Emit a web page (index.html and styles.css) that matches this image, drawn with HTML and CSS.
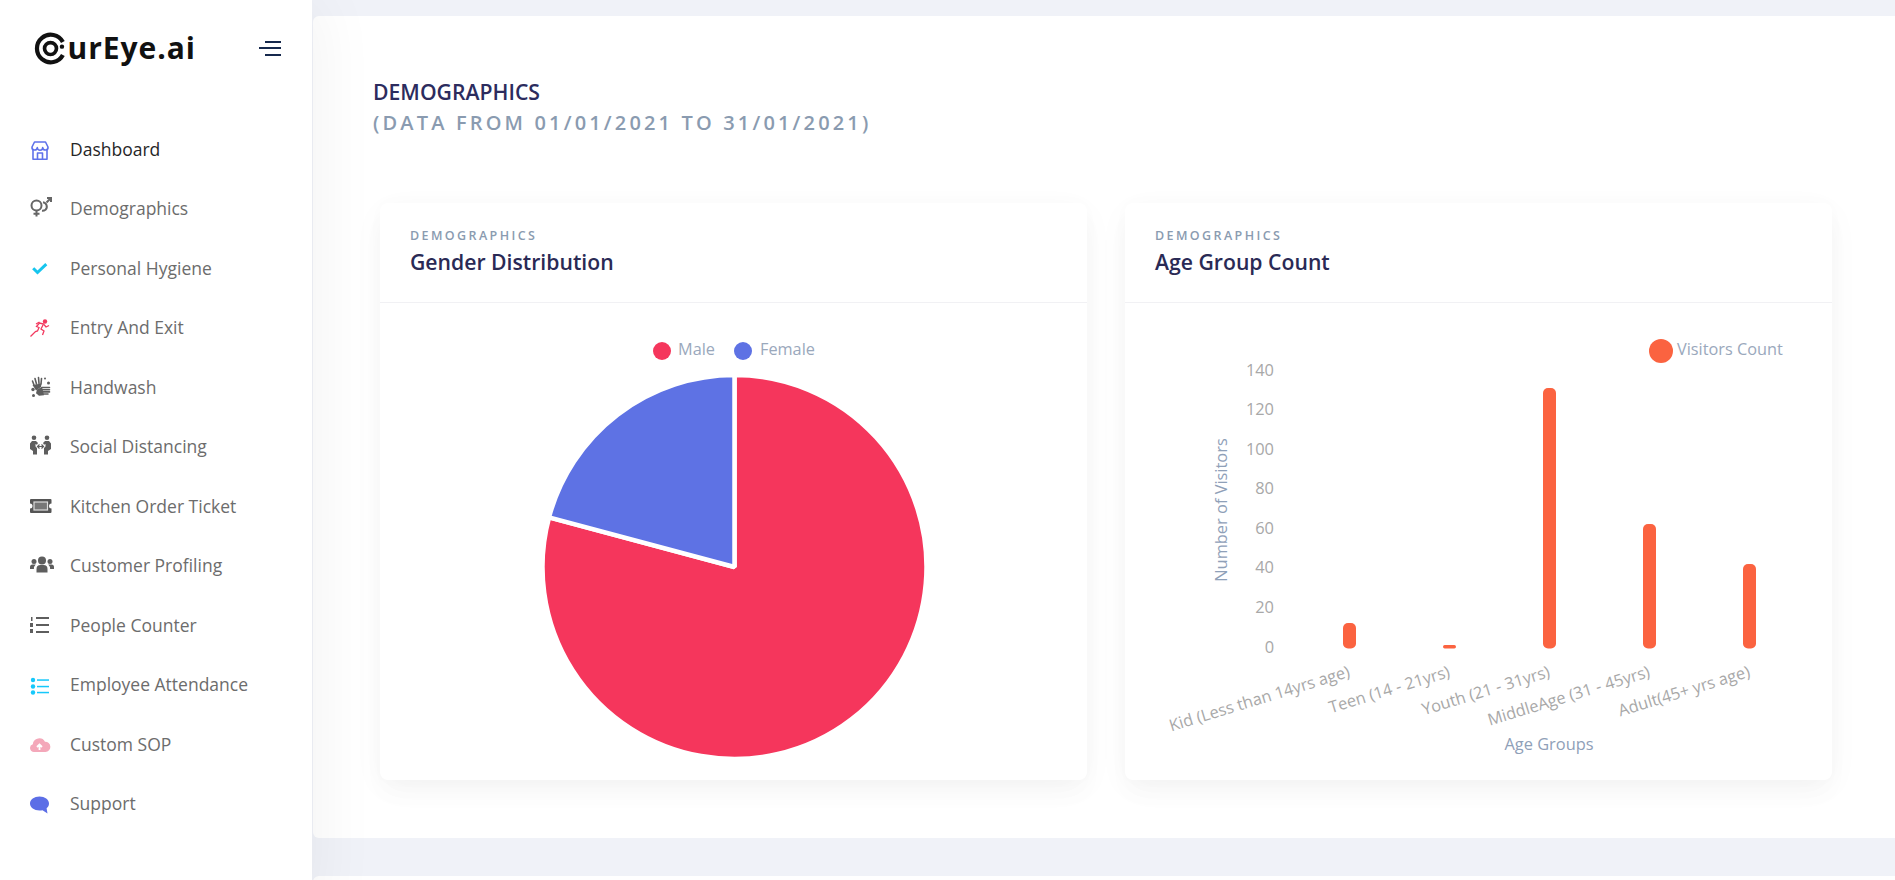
FILE: index.html
```html
<!DOCTYPE html>
<html lang="en">
<head>
<meta charset="utf-8">
<title>OurEye.ai Demographics</title>
<link rel="stylesheet" href="styles.css">
</head>
<body>
<div class="app">
  <aside class="sidebar">
    <div class="brand">
      <div class="logo">
        <svg class="logo-mark" viewBox="0 0 36 36" width="33" height="33" aria-hidden="true">
          <path d="M31.500 11A15 15 0 1 0 31.500 25" fill="none" stroke="#111" stroke-width="4.600"/>
          <circle cx="18" cy="18" r="6.500" fill="none" stroke="#111" stroke-width="4"/>
          <circle cx="30.500" cy="16" r="2.400" fill="#111"/>
        </svg>
        <span class="logo-text">urEye.ai</span>
      </div>
      <button class="burger" aria-label="Toggle menu"><i class="b-short"></i><i class="b-long"></i><i class="b-short"></i></button>
    </div>
    <nav class="nav">
      <a class="nav-item active">
        <svg class="ico" viewBox="0 0 24 24" aria-hidden="true"><g fill="none" stroke="#5f72ea" stroke-width="1.6" stroke-linejoin="round"><path d="M4.500 5h11l2.500 5a2.600 2.600 0 0 1-5.300.6 2.700 2.700 0 0 1-5.400 0A2.600 2.600 0 0 1 2 10z"/><path d="M3 12v10.200h14V12"/><path d="M7.500 22v-6h5v6"/></g></svg>
        <span>Dashboard</span>
      </a>
      <a class="nav-item">
        <svg class="ico" viewBox="0 0 24 24" aria-hidden="true"><g fill="none" stroke="#666" stroke-width="2"><circle cx="6.500" cy="9.500" r="5"/><path d="M6.500 14.500v6M3.500 17.800h6"/><path d="M13 6.200a4.500 4.500 0 0 1 2.500 7.600 5 5 0 0 1-3.500 1"/><path d="M16.500 6.500l4-4M17 2h4v4"/></g></svg>
        <span>Demographics</span>
      </a>
      <a class="nav-item">
        <svg class="ico" viewBox="0 0 24 24" aria-hidden="true"><path d="M3.200 12.200l4.300 4.300 8.800-8.400" fill="none" stroke="#16c5ee" stroke-width="3"/></svg>
        <span>Personal Hygiene</span>
      </a>
      <a class="nav-item">
        <svg class="ico" viewBox="0 0 24 24" aria-hidden="true"><g fill="none" stroke="#f2395f" stroke-width="1.300"><path d="M.5 21.500l5-5 2-.5 1.500-3.500-2.500-1 3-3.500 4 1-2.500 5 3 2-1.500 4"/><path d="M6 9l3.500-2M14 9.500l2 2.500 3-1.500"/></g><circle cx="15" cy="6.500" r="2.200" fill="#f2395f"/></svg>
        <span>Entry And Exit</span>
      </a>
      <a class="nav-item">
        <svg class="ico" viewBox="0 0 24 24" aria-hidden="true"><g fill="none" stroke="#5e5e5e" stroke-linecap="round" stroke-width="1.600"><path d="M4 10L2.500 6M6.500 9L5 3.500M9 8.500L8.500 2.500M11 9l.5-5.500"/><path d="M12 12.500h7.500M12 14.700h7.500M12 16.900h7.500M12 19h6"/></g><g fill="#5e5e5e"><path d="M2.500 10l9-1.500-.5 3.500-5 3.500z"/><path d="M7 14.500l5-2.800 2 8.600-5 .5-3-2.500z"/><circle cx="3" cy="14.500" r="1.700"/><circle cx="3.500" cy="20.500" r="1.500"/><circle cx="15" cy="3.500" r="1"/><circle cx="18.500" cy="8" r="1.500"/></g></svg>
        <span>Handwash</span>
      </a>
      <a class="nav-item">
        <svg class="ico" viewBox="0 0 24 24" aria-hidden="true"><g fill="#5e5e5e"><circle cx="4" cy="3.800" r="2.300"/><circle cx="17" cy="3.800" r="2.300"/><path d="M0 9.500l2-2.500h4l2 2-1 1.800L5.500 10v2.500L7 14v6.500H3v-3.500l-3-2z"/><path d="M21 9.500l-2-2.500h-4l-2 2 1 1.800 1.500-.8v2.500L14 14v6.500h4v-3.500l3-2z"/></g><path d="M7.500 12.500h6M9.500 10.500l-2 2 2 2M11.500 10.500l2 2-2 2" fill="none" stroke="#5e5e5e" stroke-width="1.200"/></svg>
        <span>Social Distancing</span>
      </a>
      <a class="nav-item">
        <svg class="ico" viewBox="0 0 24 24" aria-hidden="true"><path d="M1 5h19.500a1 1 0 0 1 1 1v3.500a2.500 2.500 0 0 0 0 5V18a1 1 0 0 1-1 1H1a1 1 0 0 1-1-1v-3.500a2.500 2.500 0 0 0 0-5V6a1 1 0 0 1 1-1z" fill="#555"/><rect x="4" y="8" width="13.500" height="8" fill="#777" stroke="#ddd" stroke-width="1.200"/></svg>
        <span>Kitchen Order Ticket</span>
      </a>
      <a class="nav-item">
        <svg class="ico" viewBox="0 0 24 24" aria-hidden="true"><g fill="#5e5e5e"><circle cx="12" cy="7.500" r="4"/><circle cx="4" cy="8.500" r="2.500"/><circle cx="20" cy="8.500" r="2.500"/><path d="M6.500 19.500v-3.500a4 4 0 0 1 4-4h3a4 4 0 0 1 4 4v3.500z"/><path d="M0 16v-2a2.500 2.500 0 0 1 2.500-2.500h3.200a6 6 0 0 0-1.800 4.500z"/><path d="M24 16v-2a2.500 2.500 0 0 0-2.500-2.500h-3.200a6 6 0 0 1 1.800 4.500z"/></g></svg>
        <span>Customer Profiling</span>
      </a>
      <a class="nav-item">
        <svg class="ico" viewBox="0 0 24 24" aria-hidden="true"><g fill="#5e5e5e"><rect x="6" y="4" width="13" height="2"/><rect x="6" y="11" width="13" height="2"/><rect x="6" y="18" width="13" height="2"/><rect x="1" y="4" width="1.500" height="4"/><rect x="0" y="10" width="3" height="4"/><rect x="0" y="16" width="3" height="4"/></g></svg>
        <span>People Counter</span>
      </a>
      <a class="nav-item">
        <svg class="ico" viewBox="0 0 24 24" aria-hidden="true"><g fill="#16c8fb"><circle cx="3" cy="8" r="2.200"/><circle cx="3" cy="14.500" r="2.200"/><circle cx="3" cy="20.500" r="2.200"/><rect x="7" y="7.300" width="12" height="1.500"/><rect x="7" y="13.800" width="12" height="1.500"/><rect x="7" y="19.800" width="12" height="1.500"/></g></svg>
        <span>Employee Attendance</span>
      </a>
      <a class="nav-item">
        <svg class="ico" viewBox="0 0 24 24" aria-hidden="true"><path d="M4 20a4 4 0 0 1-1.200-7.800A6.500 6.500 0 0 1 15 9.800 5 5 0 0 1 15.500 20z" fill="#f4a8ba"/><path d="M9.500 18v-5M7 15l2.500-2.500L12 15" fill="none" stroke="#fff" stroke-width="1.800"/></svg>
        <span>Custom SOP</span>
      </a>
      <a class="nav-item">
        <svg class="ico" viewBox="0 0 24 24" aria-hidden="true"><path d="M9.500 5.500c5.300 0 9.500 2.900 9.500 6.900 0 1.900-.9 3.600-2.400 4.800l.9 5.300-5-3.300c-1 .2-2 .2-3 .2C4.200 19.400 0 16.300 0 12.400s4.200-6.900 9.500-6.900z" fill="#5c6ee6"/></svg>
        <span>Support</span>
      </a>
    </nav>
  </aside>

  <main class="main">
    <section class="panel">
      <header class="page-head">
        <h1 class="page-title">DEMOGRAPHICS</h1>
        <p class="page-sub">(DATA FROM 01/01/2021 TO 31/01/2021)</p>
      </header>
      <div class="cards">
        <article class="card">
          <header class="card-head">
            <div class="card-kicker">DEMOGRAPHICS</div>
            <h2 class="card-title">Gender Distribution</h2>
          </header>
          <svg class="chart" viewBox="380 303 707 477" role="img" aria-label="Gender distribution pie chart">
            <circle cx="662" cy="351" r="9" fill="#f5365c"/>
            <text class="legend-text" x="678" y="354.500">Male</text>
            <circle cx="743" cy="351" r="9" fill="#5e72e4"/>
            <text class="legend-text" x="760" y="354.500">Female</text>
            <path d="M734.500 567L734.500 375A192 192 0 1 1 549.040 517.310Z" fill="#f5365c" stroke="#fff" stroke-width="4.500" stroke-linejoin="bevel"/>
            <path d="M734.500 567L549.040 517.310A192 192 0 0 1 734.500 375Z" fill="#5e72e4" stroke="#fff" stroke-width="4.500" stroke-linejoin="bevel"/>
          </svg>
        </article>
        <article class="card">
          <header class="card-head">
            <div class="card-kicker">DEMOGRAPHICS</div>
            <h2 class="card-title">Age Group Count</h2>
          </header>
          <svg class="chart" viewBox="1125 303 707 477" role="img" aria-label="Age group bar chart">
            <circle cx="1661" cy="351" r="12" fill="#fb6340"/>
            <text class="legend-text" x="1677" y="354.500">Visitors Count</text>
            <g class="tick" text-anchor="end">
              <text x="1274" y="375.500">140</text>
              <text x="1274" y="415">120</text>
              <text x="1274" y="454.500">100</text>
              <text x="1274" y="494">80</text>
              <text x="1274" y="533.500">60</text>
              <text x="1274" y="573.200">40</text>
              <text x="1274" y="613">20</text>
              <text x="1274" y="652.800">0</text>
            </g>
            <text class="axis-title" text-anchor="middle" transform="translate(1226.500 510) rotate(-90)">Number of Visitors</text>
            <g fill="#fb6340">
              <rect x="1343" y="623" width="13" height="25.500" rx="5"/>
              <rect x="1443" y="645" width="13" height="3.500" rx="1.700"/>
              <rect x="1543" y="388" width="13" height="260.500" rx="5"/>
              <rect x="1643" y="524" width="13" height="124.500" rx="5"/>
              <rect x="1743" y="564" width="13" height="84.500" rx="5"/>
            </g>
            <g class="tick" text-anchor="end">
              <text transform="translate(1351 676.500) rotate(-17)">Kid (Less than 14yrs age)</text>
              <text transform="translate(1451 676.500) rotate(-17)">Teen (14 - 21yrs)</text>
              <text transform="translate(1551 676.500) rotate(-17)">Youth (21 - 31yrs)</text>
              <text transform="translate(1651 676.500) rotate(-17)">MiddleAge (31 - 45yrs)</text>
              <text transform="translate(1751 676.500) rotate(-17)">Adult(45+ yrs age)</text>
            </g>
            <text class="axis-title" x="1549" y="750" text-anchor="middle">Age Groups</text>
          </svg>
        </article>
      </div>
    </section>
    <div class="panel-next"></div>
  </main>
</div>
</body>
</html>
```
FILE: styles.css
```css
* { box-sizing: border-box; }
html, body { margin: 0; height: 880px; overflow: hidden; }
body { font-family: "Open Sans", "Liberation Sans", sans-serif; background: #f0f2f8; }
.app { display: grid; grid-template-columns: 312px 1fr; height: 880px; }

.sidebar { background: #fff; box-shadow: 7px 0 60px rgba(0,0,0,.05); position: relative; z-index: 2; }
.brand { height: 96px; display: flex; align-items: center; justify-content: space-between; padding: 0 31px 0 35px; }
.logo { display: flex; align-items: center; }
.logo-mark { display: block; margin-left: -1px; }
.logo-text { font-size: 30px; font-weight: 700; color: #111; letter-spacing: .95px; margin-left: .5px; line-height: 36px; }
.burger { border: 0; background: none; padding: 0; width: 22px; display: flex; flex-direction: column; align-items: flex-end; gap: 4.500px; }
.burger i { display: block; height: 2px; background: #16294d; }
.b-short { width: 16px; }
.b-long { width: 22px; }

.nav { margin-top: 22.750px; display: flex; flex-direction: column; }
.nav-item { height: 59.500px; padding-left: 30px; display: flex; align-items: center; gap: 16px; font-size: 17.500px; color: #6c6c6c; }
.nav-item.active { color: #262626; }
.ico { width: 24px; height: 24px; flex: none; display: block; }

.main { padding: 16px 0 0 1px; min-width: 0; }
.panel { height: 822px; background: #fff; border-radius: 6px 0 0 6px; padding: 0 63px 0 67px; }
.panel-next { height: 40px; margin-top: 38px; background: #fff; border-radius: 6px 0 0 0; }

.page-head { height: 187px; padding-top: 63px; margin-left: -7px; }
.page-title { margin: 0; font-size: 21.200px; line-height: 26px; font-weight: 600; color: #2c2c5e; }
.page-sub { margin: 5px 0 0; font-size: 20px; line-height: 26px; font-weight: 600; letter-spacing: 3.160px; color: #8a9bb0; }

.cards { display: grid; grid-template-columns: 707px 707px; gap: 38px; }
.card { height: 577px; background: #fff; border-radius: 8px; overflow: hidden; box-shadow: 0 8px 35px rgba(4,9,20,.03), 0 15px 25px rgba(4,9,20,.02), 0 0 20px rgba(4,9,20,.015); display: flex; flex-direction: column; }
.card-head { height: 100px; padding: 24px 30px 0; border-bottom: 1px solid #f1f1f4; flex: none; }
.card-kicker { font-size: 12.500px; line-height: 17px; font-weight: 600; letter-spacing: 2.400px; color: #8a9bb0; }
.card-title { margin: 3px 0 0; font-size: 21.200px; line-height: 30px; font-weight: 600; color: #2a2a55; }

.chart { display: block; width: 707px; height: 477px; flex: none; }
.legend-text { font-family: "Open Sans", sans-serif; font-size: 16.300px; fill: #9aa8bc; }
.tick text { font-family: "Open Sans", sans-serif; font-size: 16.400px; fill: #a8a8a8; }
.axis-title { font-family: "Open Sans", sans-serif; font-size: 16.400px; fill: #8fa0b8; }
```
